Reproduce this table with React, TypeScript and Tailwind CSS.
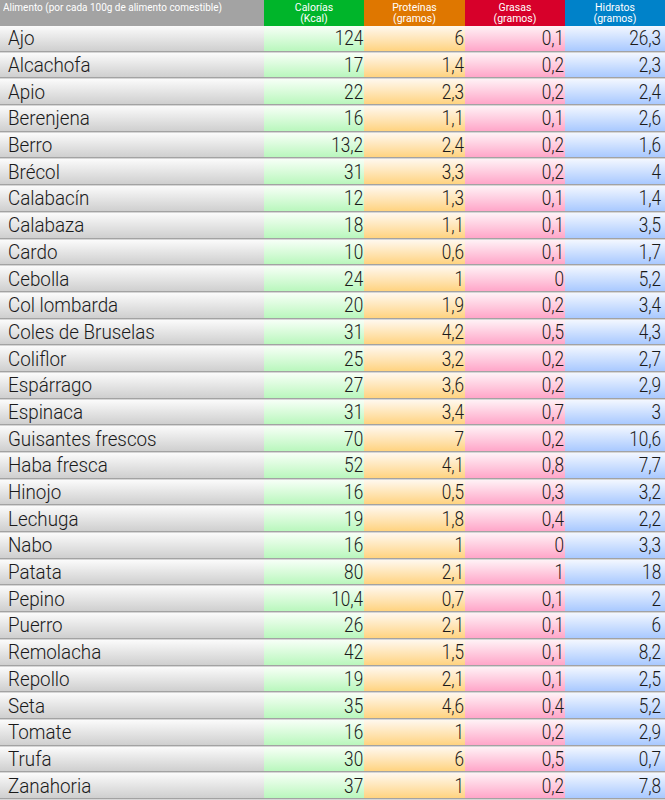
import React from "react";

const data: [string, string, string, string, string][] = [
  ["Ajo", "124", "6", "0,1", "26,3"],
  ["Alcachofa", "17", "1,4", "0,2", "2,3"],
  ["Apio", "22", "2,3", "0,2", "2,4"],
  ["Berenjena", "16", "1,1", "0,1", "2,6"],
  ["Berro", "13,2", "2,4", "0,2", "1,6"],
  ["Brécol", "31", "3,3", "0,2", "4"],
  ["Calabacín", "12", "1,3", "0,1", "1,4"],
  ["Calabaza", "18", "1,1", "0,1", "3,5"],
  ["Cardo", "10", "0,6", "0,1", "1,7"],
  ["Cebolla", "24", "1", "0", "5,2"],
  ["Col lombarda", "20", "1,9", "0,2", "3,4"],
  ["Coles de Bruselas", "31", "4,2", "0,5", "4,3"],
  ["Coliflor", "25", "3,2", "0,2", "2,7"],
  ["Espárrago", "27", "3,6", "0,2", "2,9"],
  ["Espinaca", "31", "3,4", "0,7", "3"],
  ["Guisantes frescos", "70", "7", "0,2", "10,6"],
  ["Haba fresca", "52", "4,1", "0,8", "7,7"],
  ["Hinojo", "16", "0,5", "0,3", "3,2"],
  ["Lechuga", "19", "1,8", "0,4", "2,2"],
  ["Nabo", "16", "1", "0", "3,3"],
  ["Patata", "80", "2,1", "1", "18"],
  ["Pepino", "10,4", "0,7", "0,1", "2"],
  ["Puerro", "26", "2,1", "0,1", "6"],
  ["Remolacha", "42", "1,5", "0,1", "8,2"],
  ["Repollo", "19", "2,1", "0,1", "2,5"],
  ["Seta", "35", "4,6", "0,4", "5,2"],
  ["Tomate", "16", "1", "0,2", "2,9"],
  ["Trufa", "30", "6", "0,5", "0,7"],
  ["Zanahoria", "37", "1", "0,2", "7,8"],
];

const font = { fontFamily: "Roboto, 'Liberation Sans', sans-serif" };

function Num({ v, cls, pr }: { v: string; cls: string; pr: string }) {
  return (
    <div className={`flex items-center justify-end ${cls} ${pr}`}>
      <span className="inline-block scale-x-[0.86] origin-right">{v}</span>
    </div>
  );
}

export default function App() {
  return (
    <div className="w-[665px] h-[800px] overflow-hidden bg-white flex flex-col" style={font}>
      <div className="flex h-[26px] shrink-0 text-white text-[10.5px] leading-[11.5px]">
        <div className="w-[264px] bg-[#a3a3a3] pl-[3px] pt-[2px]">
          <span className="inline-block scale-x-[0.95] origin-left whitespace-nowrap">
            Alimento (por cada 100g de alimento comestible)
          </span>
        </div>
        <div className="w-[100px] bg-[#00b52a] flex flex-col items-center justify-center">
          <span>Calorías</span>
          <span>(Kcal)</span>
        </div>
        <div className="w-[101px] bg-[#df7700] flex flex-col items-center justify-center">
          <span>Proteínas</span>
          <span>(gramos)</span>
        </div>
        <div className="w-[100px] bg-[#d7002a] flex flex-col items-center justify-center">
          <span>Grasas</span>
          <span>(gramos)</span>
        </div>
        <div className="w-[100px] bg-[#0082c9] flex flex-col items-center justify-center">
          <span>Hidratos</span>
          <span>(gramos)</span>
        </div>
      </div>
      <div className="flex flex-col h-[774px] shrink-0">
        {data.map((r, i) => (
          <div key={i} className="flex h-[26.69px] shrink-0 flex-col">
            <div className="grid grid-cols-[264px_100px_101px_100px_100px] flex-1 min-h-0 text-[20px] leading-none font-light text-[#1a1a1a]">
              <div className="pl-[8px] flex items-center bg-gradient-to-b from-[#fbfbfb] to-[#cfcfcf]">
                <span className="inline-block scale-x-[0.94] origin-left whitespace-nowrap">{r[0]}</span>
              </div>
              <Num v={r[1]} cls="bg-gradient-to-b from-[#f7fff7] to-[#b9f7bd]" pr="pr-[1px]" />
              <Num v={r[2]} cls="bg-gradient-to-b from-[#fff8ee] to-[#ffd37f]" pr="pr-[1px]" />
              <Num v={r[3]} cls="bg-gradient-to-b from-[#fff2f6] to-[#ffa6c9]" pr="pr-[1px]" />
              <Num v={r[4]} cls="bg-gradient-to-b from-[#f3f7ff] to-[#a9c9ff]" pr="pr-[4px]" />
            </div>
            <div className="h-[2px] shrink-0 bg-gradient-to-b from-[#8a8a8a] to-[#f0f0f0]" />
          </div>
        ))}
      </div>
    </div>
  );
}
